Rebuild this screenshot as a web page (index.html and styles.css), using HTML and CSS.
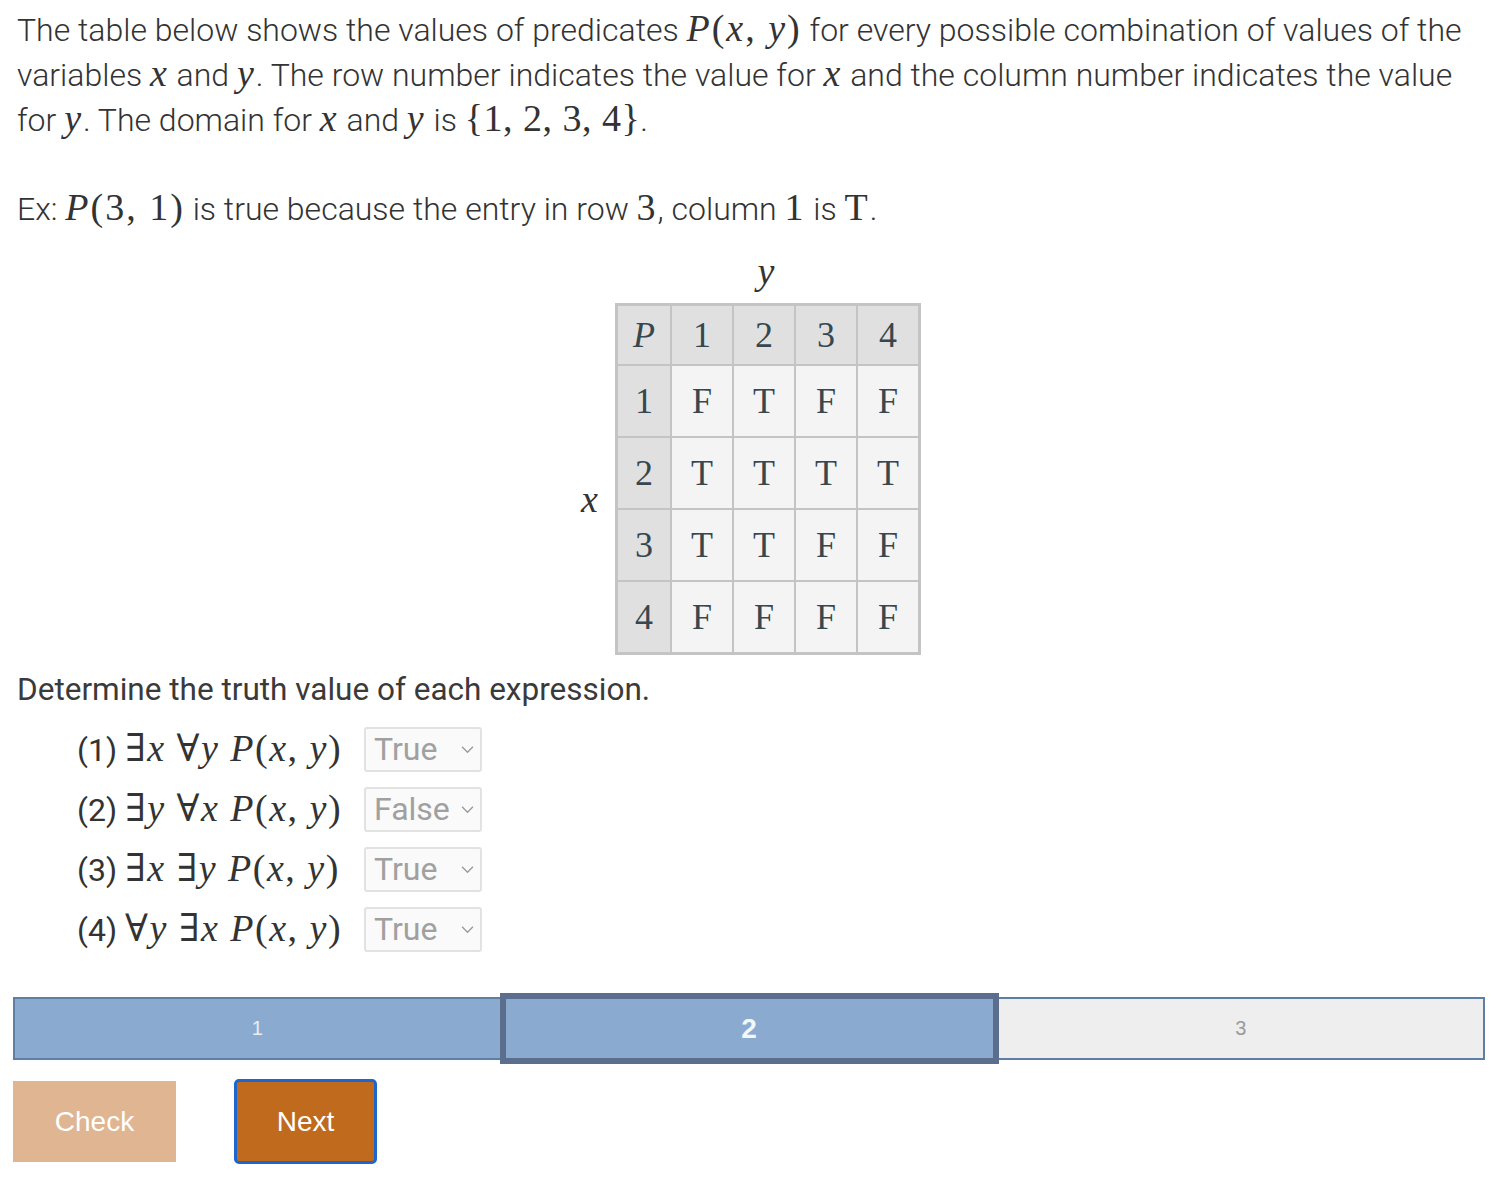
FILE: index.html
```html
<!DOCTYPE html>
<html>
<head>
<meta charset="utf-8">
<link rel="stylesheet" href="styles.css">
</head>
<body>
<div class="page">
  <p class="intro">The table below shows the values of predicates <span class="m"><i>P</i>(<i>x</i>, <i>y</i>)</span> for every possible combination of values of the variables <span class="m"><i>x</i></span> and <span class="m"><i>y</i></span>. The row number indicates the value for <span class="m"><i>x</i></span> and the column number indicates the value for <span class="m"><i>y</i></span>. The domain for <span class="m"><i>x</i></span> and <span class="m"><i>y</i></span> is <span class="m tight">{1, 2, 3, 4}</span>.</p>
  <p class="example">Ex: <span class="m"><i>P</i>(3, 1)</span> is true because the entry in row <span class="m">3</span>, column <span class="m">1</span> is <span class="m">T</span>.</p>

  <div class="figure">
    <div class="ylabel"><i>y</i></div>
    <div class="figrow">
      <div class="xlabel"><i>x</i></div>
      <table class="truth">
        <tr class="head"><th><i>P</i></th><th>1</th><th>2</th><th>3</th><th>4</th></tr>
        <tr><th>1</th><td>F</td><td>T</td><td>F</td><td>F</td></tr>
        <tr><th>2</th><td>T</td><td>T</td><td>T</td><td>T</td></tr>
        <tr><th>3</th><td>T</td><td>T</td><td>F</td><td>F</td></tr>
        <tr><th>4</th><td>F</td><td>F</td><td>F</td><td>F</td></tr>
      </table>
    </div>
  </div>

  <p class="prompt">Determine the truth value of each expression.</p>
  <ul class="items">
    <li><span class="expr">(1) <span class="m">∃<i>x</i> ∀<i>y</i> <i>P</i>(<i>x</i>, <i>y</i>)</span></span><span class="sel">True<svg viewBox="0 0 12 8" class="chev"><path d="M1 1.5 L6 6.5 L11 1.5" fill="none" stroke="#999" stroke-width="1.2"/></svg></span></li>
    <li><span class="expr">(2) <span class="m">∃<i>y</i> ∀<i>x</i> <i>P</i>(<i>x</i>, <i>y</i>)</span></span><span class="sel">False<svg viewBox="0 0 12 8" class="chev"><path d="M1 1.5 L6 6.5 L11 1.5" fill="none" stroke="#999" stroke-width="1.2"/></svg></span></li>
    <li><span class="expr">(3) <span class="m">∃<i>x</i> ∃<i>y</i> <i>P</i>(<i>x</i>, <i>y</i>)</span></span><span class="sel">True<svg viewBox="0 0 12 8" class="chev"><path d="M1 1.5 L6 6.5 L11 1.5" fill="none" stroke="#999" stroke-width="1.2"/></svg></span></li>
    <li><span class="expr">(4) <span class="m">∀<i>y</i> ∃<i>x</i> <i>P</i>(<i>x</i>, <i>y</i>)</span></span><span class="sel">True<svg viewBox="0 0 12 8" class="chev"><path d="M1 1.5 L6 6.5 L11 1.5" fill="none" stroke="#999" stroke-width="1.2"/></svg></span></li>
  </ul>

  <div class="progress">
    <div class="seg done">1</div>
    <div class="seg current">2</div>
    <div class="seg todo">3</div>
  </div>

  <div class="buttons">
    <button class="btn check">Check</button>
    <button class="btn next">Next</button>
  </div>
</div>
</body>
</html>
```

FILE: styles.css
```css
html, body {
  margin: 0;
  padding: 0;
  background: #ffffff;
}
.page {
  padding: 8px 15px 0 17px;
  font-family: Roboto, "Liberation Sans", sans-serif;
  color: #333333;
}
.m {
  font-family: "Liberation Serif", "DejaVu Serif", serif;
  font-size: 38px;
  letter-spacing: 2px;
  line-height: 1;
  color: #333333;
}
.m.tight {
  letter-spacing: 0.5px;
}
.m i {
  font-style: italic;
}
.intro, .example {
  font-weight: 300;
  font-size: 32px;
  line-height: 45px;
  margin: 0;
}
.example {
  margin-top: 44px;
}
.figure {
  display: flex;
  flex-direction: column;
  align-items: center;
  margin-top: 17px;
}
.ylabel, .xlabel {
  font-family: "Liberation Serif", "DejaVu Serif", serif;
  font-size: 38px;
  color: #333333;
}
.ylabel {
  height: 45px;
  line-height: 45px;
  text-align: center;
  padding-left: 30px;
}
.figrow {
  display: flex;
  align-items: center;
  margin-top: 9px;
}
.xlabel {
  margin-right: 17px;
  margin-top: 40px;
}
.truth {
  border-collapse: collapse;
  border: 3px solid #c4c4c4;
  font-family: "Liberation Serif", "DejaVu Serif", serif;
  font-size: 36px;
  color: #37474f;
}
.truth th, .truth td {
  border: 2px solid #c4c4c4;
  text-align: center;
  font-weight: 400;
  width: 60px;
  height: 70px;
  padding: 0;
  background: #f4f4f4;
}
.truth th {
  background: #e0e0e0;
  width: 52px;
}
.truth .head th {
  height: 58px;
  width: 60px;
}
.truth .head th:first-child {
  width: 52px;
}
.prompt {
  font-size: 31.5px;
  line-height: 45px;
  margin: 12px 0 0 0;
  font-weight: 400;
  color: #3a3a3a;
}
.items {
  list-style: none;
  margin: 7px 0 0 0;
  padding: 0 0 0 60px;
}
.items li {
  display: flex;
  align-items: center;
  height: 60px;
}
.expr {
  font-size: 32px;
  font-weight: 400;
  width: 287px;
  white-space: nowrap;
}
.expr .m {
  letter-spacing: 1.5px;
}
.sel {
  box-sizing: border-box;
  width: 118px;
  height: 45px;
  border: 2px solid #e2e2e2;
  border-radius: 3px;
  background: #fafafa;
  color: #a0a0a0;
  font-size: 32px;
  display: flex;
  align-items: center;
  justify-content: space-between;
  padding: 0 6px 0 8px;
}
.chev {
  width: 13px;
  height: 9px;
}
.progress {
  display: flex;
  margin-top: 38px;
  margin-left: -4px;
  height: 63px;
}
.seg {
  flex: 1;
  box-sizing: border-box;
  display: flex;
  align-items: center;
  justify-content: center;
  font-family: "Liberation Sans", Arial, sans-serif;
  font-size: 20px;
  border-top: 2px solid #5f7ea4;
  border-bottom: 2px solid #5f7ea4;
}
.seg.done {
  background: #8aabcf;
  color: #e8eef5;
  border-left: 2px solid #5f7ea4;
}
.seg.current {
  background: #8aabcf;
  color: #f4f6f9;
  font-weight: 700;
  font-size: 28px;
  border: 6px solid #5b6e8e;
  margin: -4px 0;
  flex: 0 0 499px;
}
.seg.todo {
  background: #eeeeee;
  color: #999999;
  border-right: 2px solid #5f7ea4;
}
.buttons {
  display: flex;
  align-items: center;
  gap: 58px;
  margin-top: 19px;
  margin-left: -4px;
}
.btn {
  font-family: "Liberation Sans", Arial, sans-serif;
  font-size: 28px;
  color: #ffffff;
  border: none;
  padding: 0;
  cursor: pointer;
}
.check {
  width: 163px;
  height: 81px;
  background: #e0b592;
}
.next {
  width: 143px;
  height: 85px;
  background: #c06a1d;
  border: 3px solid #1f66cc;
  border-radius: 5px;
}
```
